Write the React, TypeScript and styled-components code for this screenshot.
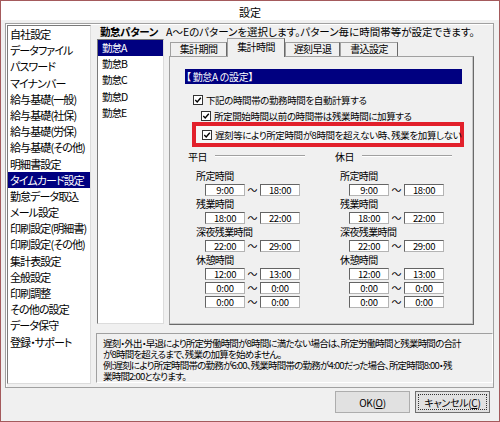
import styled, { createGlobalStyle } from 'styled-components'

const Global = createGlobalStyle`
  html, body {
    margin: 0;
    padding: 0;
    background: #fff;
  }
  body {
    font-family: "Noto Sans CJK JP", "Noto Sans", sans-serif;
    font-feature-settings: "palt" 1;
    color: #000;
  }
`

const NAVY = '#000080'

const Window = styled.div`
  width: 500px;
  height: 422px;
  box-sizing: border-box;
  border: 1px solid #a45a5c;
  background: #f0f0f0;
  display: flex;
  flex-direction: column;
`

const TitleBar = styled.div`
  height: 19px;
  box-sizing: border-box;
  padding-top: 3px;
  background: #fff;
  text-align: center;
  font-size: 11px;
  line-height: 16px;
`

const Body = styled.div`
  flex: 1;
  display: flex;
  flex-direction: column;
  padding: 3px 0 0 4px;
`

const Frame = styled.div`
  width: 489px;
  box-sizing: border-box;
  border: 1px solid #a0a0a0;
  box-shadow: inset 1px 1px 0 #fff;
  padding: 1px 0 3px 1px;
  display: grid;
  grid-template-columns: 84px 397px;
  column-gap: 5px;
`

const ListBox = styled.div<{ $h: number }>`
  height: ${({ $h }) => $h}px;
  box-sizing: border-box;
  background: #fff;
  border: 1px solid;
  border-color: #7a7a7a #dcdcdc #dcdcdc #7a7a7a;
  overflow: hidden;
`

const SideItem = styled.div<{ $on?: boolean }>`
  height: 16.2px;
  line-height: 16.2px;
  padding-left: 2px;
  font-size: 11px;
  letter-spacing: -0.9px;
  white-space: nowrap;
  background: ${({ $on }) => ($on ? NAVY : 'transparent')};
  color: ${({ $on }) => ($on ? '#fff' : '#000')};
`

const Main = styled.div`
  display: flex;
  flex-direction: column;
`

const HeadRow = styled.div`
  height: 13px;
  display: flex;
  align-items: center;
  font-size: 10.5px;
  letter-spacing: 0;
  white-space: nowrap;
`

const HeadLabel = styled.span`
  width: 66px;
  padding-left: 4px;
  font-size: 10.5px;
  letter-spacing: -0.4px;
  font-weight: 700;
`

const Middle = styled.div`
  height: 287px;
  display: flex;
  align-items: flex-start;
`

const PatternBox = styled(ListBox)`
  width: 67px;
  margin: 1px 0 0 1px;
`

const PatternItem = styled(SideItem)`
  padding-left: 4px;
  font-size: 10.5px;
  letter-spacing: -1px;
`

const TabControl = styled.div`
  width: 305px;
  margin-left: 5px;
  display: flex;
  flex-direction: column;
`

const TabStrip = styled.div`
  height: 18px;
  display: flex;
  align-items: flex-end;
  padding-left: 1px;
  position: relative;
  z-index: 1;
`

const Tab = styled.div<{ $w: number; $active?: boolean }>`
  width: ${({ $w }) => $w}px;
  height: ${({ $active }) => ($active ? 19 : 14)}px;
  margin-bottom: ${({ $active }) => ($active ? -1 : 0)}px;
  box-sizing: border-box;
  border: 1px solid #a0a0a0;
  border-bottom: none;
  border-right-color: #696969;
  background: #f0f0f0;
  font-size: 10px;
  letter-spacing: -0.6px;
  line-height: ${({ $active }) => ($active ? 16 : 12)}px;
  text-align: center;
  white-space: nowrap;
`

const Panel = styled.div`
  height: 269px;
  box-sizing: border-box;
  border: 1px solid;
  border-color: #a0a0a0 #696969 #696969 #a0a0a0;
  box-shadow: inset -1px -1px 0 #c8c8c8;
  padding-top: 12px;
  display: flex;
  flex-direction: column;
  align-items: flex-start;
`

const SectionBar = styled.div`
  margin-left: 15px;
  width: 277px;
  height: 15px;
  box-sizing: border-box;
  padding-left: 1px;
  background: ${NAVY};
  color: #fff;
  font-size: 10px;
  letter-spacing: -0.3px;
  line-height: 15px;
  white-space: pre;
`

const CheckRow = styled.div<{ $left: number; $top: number }>`
  display: flex;
  align-items: center;
  gap: 3px;
  height: 12px;
  margin-left: ${({ $left }) => $left}px;
  margin-top: ${({ $top }) => $top}px;
  font-size: 9.5px;
  letter-spacing: -0.4px;
  white-space: nowrap;
`

const Box = styled.span`
  width: 10px;
  height: 10px;
  box-sizing: border-box;
  border: 1px solid #333;
  background: #fff;
  display: inline-flex;
  flex: none;
`

const Highlight = styled.div`
  margin-left: 22px;
  width: 272px;
  height: 25px;
  box-sizing: border-box;
  border: 4px solid #e2202b;
  background: #f6f6f6;
  padding-left: 6px;
  display: flex;
  align-items: center;
`

const Groups = styled.div`
  margin: 3px 0 0 18px;
  display: grid;
  grid-template-columns: 144px 144px;
`

const GroupHeader = styled.div<{ $shift?: number }>`
  width: 117px;
  height: 12px;
  margin-left: ${({ $shift }) => $shift ?? 0}px;
  display: flex;
  align-items: center;
  font-size: 10px;
  letter-spacing: -0.5px;
`

const Rule = styled.span`
  flex: 1;
  margin-left: 8px;
  border-top: 1px solid #a0a0a0;
  border-bottom: 1px solid #fff;
`

const Sections = styled.div`
  margin-top: 8px;
  display: flex;
  flex-direction: column;
  gap: 2px;
`

const Section = styled.div`
  display: flex;
  flex-direction: column;
  gap: 2px;
`

const FieldLabel = styled.div`
  height: 12px;
  line-height: 12px;
  padding-left: 8px;
  font-size: 10px;
  letter-spacing: -0.6px;
  white-space: nowrap;
`

const TimeRow = styled.div`
  display: flex;
  align-items: center;
  margin-left: 17px;
  height: 12px;
`

const TimeBox = styled.span`
  width: 40px;
  height: 12px;
  box-sizing: border-box;
  border: 1px solid;
  border-color: #646464 #b4b4b4 #b4b4b4 #646464;
  background: #fff;
  font-size: 9.5px;
  letter-spacing: -0.3px;
  line-height: 10px;
  text-align: center;
`

const Tilde = styled.span`
  width: 15px;
  text-align: center;
  font-size: 10px;
  line-height: 12px;
`

const Note = styled.div`
  margin-top: 8px;
  height: 50px;
  box-sizing: border-box;
  border: 1px solid;
  border-color: #a0a0a0 #fff #fff #a0a0a0;
  padding: 4px 6px 0;
  font-size: 9.5px;
  letter-spacing: -0.8px;
  line-height: 11px;
  white-space: nowrap;
  overflow: hidden;
`

const ButtonRow = styled.div`
  margin-top: 3px;
  display: flex;
  justify-content: flex-end;
  gap: 5px;
  padding-right: 9px;
`

const Button = styled.button<{ $focus?: boolean }>`
  width: 75px;
  height: 22px;
  box-sizing: border-box;
  border: 1px solid ${({ $focus }) => ($focus ? '#707070' : '#adadad')};
  background: #e1e1e1;
  font-family: inherit;
  font-feature-settings: inherit;
  font-size: 10px;
  letter-spacing: -0.3px;
  padding: 0;
  position: relative;
  color: #000;

  &::after {
    content: '';
    display: ${({ $focus }) => ($focus ? 'block' : 'none')};
    position: absolute;
    inset: 2px;
    border: 1px dotted #333;
  }
`

const sideItems = [
  '自社設定', 'データファイル', 'パスワード', 'マイナンバー', '給与基礎(一般)',
  '給与基礎(社保)', '給与基礎(労保)', '給与基礎(その他)', '明細書設定', 'タイムカード設定',
  '勤怠データ取込', 'メール設定', '印刷設定(明細書)', '印刷設定(その他)', '集計表設定',
  '全般設定', '印刷調整', 'その他の設定', 'データ保守', '登録・サポート',
]

const patterns = ['勤怠A', '勤怠B', '勤怠C', '勤怠D', '勤怠E']

const tabs = [
  { label: '集計期間', w: 57 },
  { label: '集計時間', w: 58, active: true },
  { label: '遅刻早退', w: 55 },
  { label: '書込設定', w: 58 },
]

type Field = { label: string; ranges: [string, string][] }

const weekday: Field[] = [
  { label: '所定時間', ranges: [['9:00', '18:00']] },
  { label: '残業時間', ranges: [['18:00', '22:00']] },
  { label: '深夜残業時間', ranges: [['22:00', '29:00']] },
  { label: '休憩時間', ranges: [['12:00', '13:00'], ['0:00', '0:00'], ['0:00', '0:00']] },
]

function Check() {
  return (
    <Box>
      <svg width="8" height="8" viewBox="0 0 8 8">
        <path d="M1.3 4 L3.2 5.9 L6.8 1.8" fill="none" stroke="#000" strokeWidth="1.4" />
      </svg>
    </Box>
  )
}

function Group({ title, fields, shift }: { title: string; fields: Field[]; shift?: number }) {
  return (
    <div>
      <GroupHeader $shift={shift}>
        {title}
        <Rule />
      </GroupHeader>
      <Sections>
        {fields.map((f) => (
          <Section key={f.label}>
            <FieldLabel>{f.label}</FieldLabel>
            {f.ranges.map(([a, b], i) => (
              <TimeRow key={i}>
                <TimeBox>{a}</TimeBox>
                <Tilde>～</Tilde>
                <TimeBox>{b}</TimeBox>
              </TimeRow>
            ))}
          </Section>
        ))}
      </Sections>
    </div>
  )
}

export default function App() {
  return (
    <Window>
      <Global />
      <TitleBar>設定</TitleBar>
      <Body>
        <Frame>
          <ListBox $h={359}>
            {sideItems.map((s) => (
              <SideItem key={s} $on={s === 'タイムカード設定'}>{s}</SideItem>
            ))}
          </ListBox>
          <Main>
            <HeadRow>
              <HeadLabel>勤怠パターン</HeadLabel>
              <span>A～Eのパターンを選択します。パターン毎に時間帯等が設定できます。</span>
            </HeadRow>
            <Middle>
              <PatternBox $h={285}>
                {patterns.map((p, i) => (
                  <PatternItem key={p} $on={i === 0}>{p}</PatternItem>
                ))}
              </PatternBox>
              <TabControl>
                <TabStrip>
                  {tabs.map((t) => (
                    <Tab key={t.label} $w={t.w} $active={t.active}>{t.label}</Tab>
                  ))}
                </TabStrip>
                <Panel>
                  <SectionBar>【 勤怠A の設定】</SectionBar>
                  <CheckRow $left={23} $top={10}>
                    <Check />
                    下記の時間帯の勤務時間を自動計算する
                  </CheckRow>
                  <CheckRow $left={31} $top={4}>
                    <Check />
                    所定開始時間以前の時間帯は残業時間に加算する
                  </CheckRow>
                  <Highlight>
                    <CheckRow $left={0} $top={0}>
                      <Check />
                      遅刻等により所定時間が8時間を超えない時、残業を加算しない
                    </CheckRow>
                  </Highlight>
                  <Groups>
                    <Group title="平日" fields={weekday} />
                    <Group title="休日" fields={weekday} shift={3} />
                  </Groups>
                </Panel>
              </TabControl>
            </Middle>
            <Note>
              遅刻・外出・早退により所定労働時間が8時間に満たない場合は、所定労働時間と残業時間の合計
              <br />
              が8時間を超えるまで、残業の加算を始めません。
              <br />
              例:遅刻により所定時間帯の勤務が6:00、残業時間帯の勤務が4:00だった場合、所定時間8:00・残
              <br />
              業時間2:00となります。
            </Note>
          </Main>
        </Frame>
        <ButtonRow>
          <Button>
            OK(<u>O</u>)
          </Button>
          <Button $focus>
            キャンセル(<u>C</u>)
          </Button>
        </ButtonRow>
      </Body>
    </Window>
  )
}
